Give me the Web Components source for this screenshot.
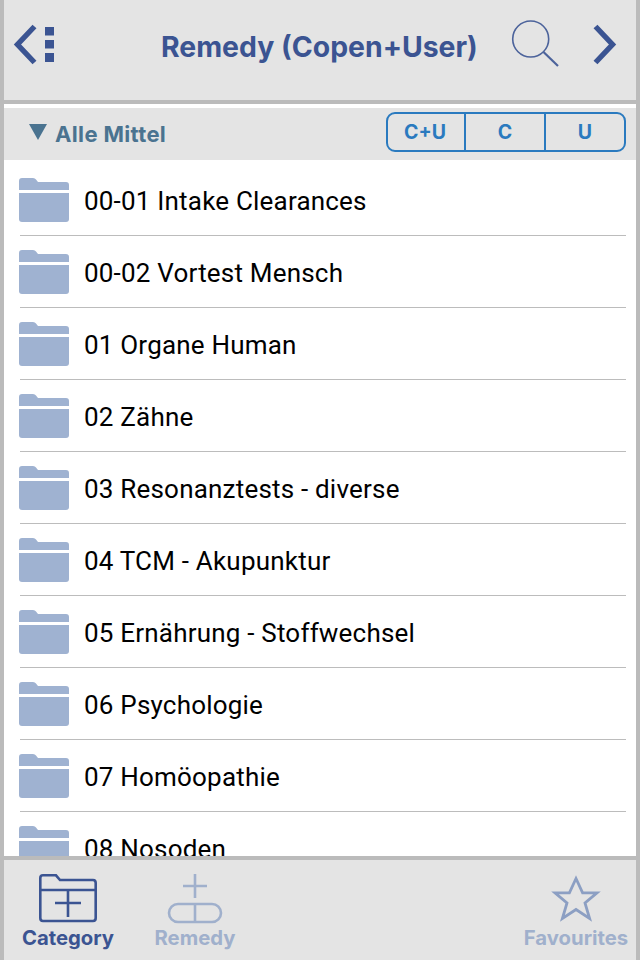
<!DOCTYPE html>
<html>
<head>
<meta charset="utf-8">
<title>Remedy</title>
<style>
  html, body { margin: 0; padding: 0; height: 100%; background: #e4e4e4; }
  body { font-family: Inter, "Liberation Sans", sans-serif; }
</style>
</head>
<body>
<app-shell>
  <nav-header slot="header" title-text="Remedy (Copen+User)"></nav-header>
  <filter-bar slot="filter" label="Alle Mittel"></filter-bar>
  <folder-row>00-01 Intake Clearances</folder-row>
  <folder-row>00-02 Vortest Mensch</folder-row>
  <folder-row>01 Organe Human</folder-row>
  <folder-row>02 Zähne</folder-row>
  <folder-row>03 Resonanztests - diverse</folder-row>
  <folder-row>04 TCM - Akupunktur</folder-row>
  <folder-row>05 Ernährung - Stoffwechsel</folder-row>
  <folder-row>06 Psychologie</folder-row>
  <folder-row>07 Homöopathie</folder-row>
  <folder-row>08 Nosoden</folder-row>
  <tab-bar slot="tabs"></tab-bar>
</app-shell>

<script>
class AppShell extends HTMLElement {
  constructor() {
    super();
    this.attachShadow({ mode: 'open' });
    this.shadowRoot.innerHTML = `
      <style>
        :host {
          display: flex;
          flex-direction: column;
          box-sizing: border-box;
          width: 640px;
          height: 960px;
          border-left: 4px solid #bbb;
          border-right: 4px solid #bbb;
          background: #fff;
          overflow: hidden;
        }
        #list {
          flex: 1;
          min-height: 0;
          overflow: hidden;
          padding-top: 4px;
          background: #fff;
        }
      </style>
      <slot name="header"></slot>
      <slot name="filter"></slot>
      <div id="list"><slot></slot></div>
      <slot name="tabs"></slot>
    `;
  }
}

class NavHeader extends HTMLElement {
  constructor() {
    super();
    this.attachShadow({ mode: 'open' });
    this.shadowRoot.innerHTML = `
      <style>
        :host {
          display: block;
          box-sizing: border-box;
          height: 108px;
          border-bottom: 4px solid #fff;
        }
        #bar {
          box-sizing: border-box;
          height: 104px;
          display: flex;
          align-items: flex-start;
          background: #e4e4e4;
          border-bottom: 4px solid #bbb;
        }
        svg { display: block; flex: none; }
        h1 {
          flex: 1;
          margin: 0;
          padding: 30px 0 0 97px;
          font-size: 28.4px;
          line-height: 34px;
          font-weight: 700;
          color: #3b5492;
          white-space: nowrap;
        }
      </style>
      <div id="bar">
        <svg width="60" height="72" viewBox="4 0 60 72">
          <path d="M34.5 26.5 L17.5 44.5 L34.5 62.5" fill="none" stroke="#3b5492" stroke-width="5.4"/>
          <rect x="45" y="27" width="9" height="8.5" fill="#3b5492"/>
          <rect x="45" y="40" width="9" height="8.5" fill="#3b5492"/>
          <rect x="45" y="53" width="9" height="9" fill="#3b5492"/>
        </svg>
        <h1 id="title"></h1>
        <svg width="132" height="72" viewBox="504 0 132 72">
          <circle cx="530.7" cy="39" r="18" fill="none" stroke="#4c639b" stroke-width="1.6"/>
          <path d="M543.5 52 L558 66" fill="none" stroke="#4c639b" stroke-width="2.2"/>
          <path d="M595.5 26.5 L612.5 44.5 L595.5 62.5" fill="none" stroke="#3b5492" stroke-width="5.4"/>
        </svg>
      </div>
    `;
  }

  connectedCallback() {
    this.shadowRoot.getElementById('title').textContent = this.getAttribute('title-text');
  }
}

class FilterBar extends HTMLElement {
  constructor() {
    super();
    this.attachShadow({ mode: 'open' });
    this.shadowRoot.innerHTML = `
      <style>
        :host {
          display: flex;
          align-items: center;
          box-sizing: border-box;
          height: 52px;
          padding: 0 10px 4px 25px;
          background: #e4e4e4;
        }
        svg { display: block; flex: none; margin-right: 8px; }
        #label {
          flex: 1;
          font-size: 22px;
          letter-spacing: 0.35px;
          font-weight: 700;
          color: #4a7390;
          margin-top: 4px;
        }
        #segments {
          display: flex;
          box-sizing: border-box;
          width: 240px;
          height: 40px;
          border: 2px solid #2a7abf;
          border-radius: 9px;
        }
        #segments span {
          flex: 1;
          display: flex;
          align-items: center;
          justify-content: center;
          font-size: 19.5px;
          font-weight: 700;
          color: #2a7abf;
        }
        #segments span:first-child { flex: none; width: 74px; padding-right: 2px; }
        #segments span:nth-child(2) { flex: none; width: 78px; }
        #segments span + span { border-left: 2px solid #2a7abf; }
      </style>
      <svg width="18" height="16" viewBox="0 0 18 16"><path d="M0 0 H18 L9 16 Z" fill="#4a7390"/></svg>
      <span id="label"></span>
      <div id="segments"><span>C+U</span><span>C</span><span>U</span></div>
    `;
  }

  connectedCallback() {
    this.shadowRoot.getElementById('label').textContent = this.getAttribute('label');
  }
}

class FolderRow extends HTMLElement {
  constructor() {
    super();
    this.attachShadow({ mode: 'open' });
    this.shadowRoot.innerHTML = `
      <style>
        :host {
          display: flex;
          align-items: center;
          box-sizing: border-box;
          height: 72px;
          margin: 0 10px 0 16px;
          border-bottom: 1px solid #bcbcbc;
          font-family: Roboto, "Liberation Sans", sans-serif;
          font-size: 26px;
          letter-spacing: 0.2px;
          padding-top: 2px;
          color: #000;
          white-space: nowrap;
        }
        svg { display: block; flex: none; margin: -2px 15px 0 -1px; }
      </style>
      <svg width="50" height="44" viewBox="0 0 50 44">
        <path d="M0 12 V3 Q0 0 3 0 H14 Q16 0 17 1.5 L19 4 H47 Q50 4 50 7 V12 Z" fill="#9fb2d1"/>
        <path d="M0 15 H50 V41 Q50 44 47 44 H3 Q0 44 0 41 Z" fill="#9fb2d1"/>
      </svg>
      <slot></slot>
    `;
  }
}

class TabBar extends HTMLElement {
  constructor() {
    super();
    this.attachShadow({ mode: 'open' });
    this.shadowRoot.innerHTML = `
      <style>
        :host {
          display: flex;
          flex: none;
          box-sizing: border-box;
          height: 104px;
          border-top: 4px solid #bbb;
          background: #e4e4e4;
          padding-top: 14px;
        }
        .tab {
          display: flex;
          flex-direction: column;
          align-items: center;
          font-size: 20.3px;
          line-height: 24px;
          font-weight: 700;
          color: #a0b0cc;
        }
        .tab svg { display: block; margin-bottom: 2px; }
        #category { color: #3b5492; width: 128px; }
        #remedy { width: 126px; }
        #favourites { width: 120px; margin-left: auto; }
      </style>
      <div class="tab" id="category">
        <svg width="58" height="50" viewBox="0 0 58 50" fill="none" stroke="#3b5492" stroke-width="2.6">
          <path d="M1.3 44 V4 Q1.3 1.3 4 1.3 H17 L21 6 H54 Q56.7 6 56.7 9 V44 Q56.7 47 54 47 H4 Q1.3 47 1.3 44 Z"/>
          <path d="M1.3 16 H56.7"/>
          <path d="M16 29 H42 M29 16.5 V43"/>
        </svg>
        Category
      </div>
      <div class="tab" id="remedy">
        <svg width="56" height="50" viewBox="0 0 56 50" fill="none" stroke="#a0b0cc" stroke-width="2.6">
          <path d="M16 12 H40 M28 0 V24"/>
          <rect x="2" y="30" width="52" height="18" rx="9"/>
          <path d="M28 30 V48"/>
        </svg>
        Remedy
      </div>
      <div class="tab" id="favourites">
        <svg width="50" height="50" viewBox="0 0 50 50">
          <path d="M25 4.5 L31.6 18.8 L46 18.8 L34 29 L38.6 44.5 L25 35.5 L11.4 44.5 L16 29 L4 18.8 L18.4 18.8 Z" fill="none" stroke="#8c9fc3" stroke-width="2.8"/>
        </svg>
        Favourites
      </div>
    `;
  }
}

customElements.define('app-shell', AppShell);
customElements.define('nav-header', NavHeader);
customElements.define('filter-bar', FilterBar);
customElements.define('folder-row', FolderRow);
customElements.define('tab-bar', TabBar);
</script>
</body>
</html>
